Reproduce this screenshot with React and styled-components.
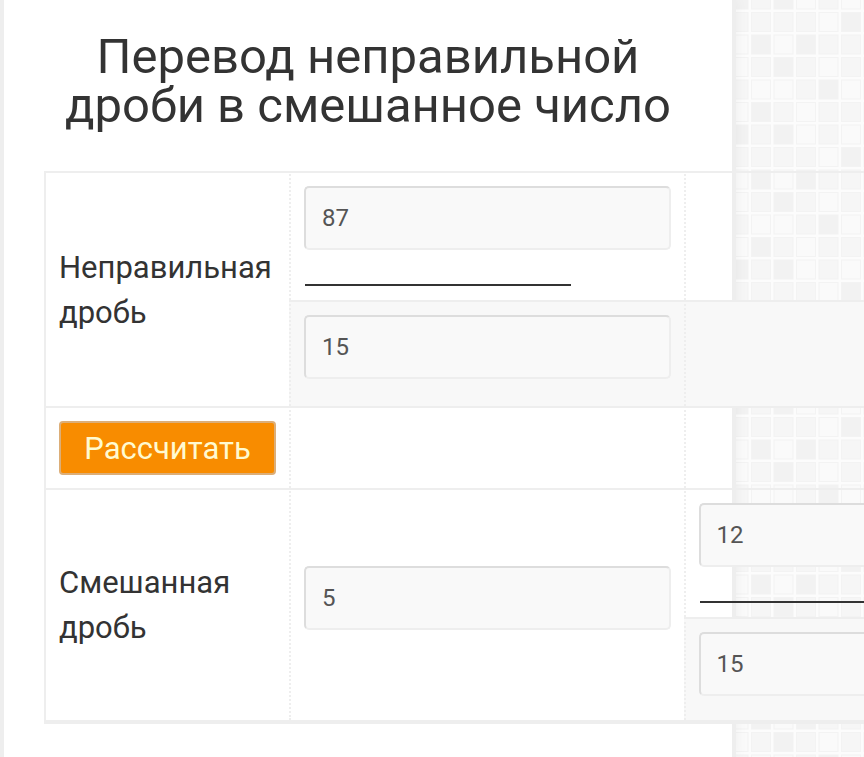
import React, { useState } from 'react';
import styled, { createGlobalStyle } from 'styled-components';

// shade of every tile in one repeat of the page background
const shades = ['#fafafa', '#f6f6f6', '#f2f2f2'];
const mosaic = [
  [2, 1, 2, 0, 1, 0],
  [1, 1, 1, 1, 0, 2],
  [0, 2, 0, 2, 1, 1],
  [0, 1, 2, 1, 0, 1],
  [1, 0, 0, 1, 2, 0],
  [0, 2, 1, 0, 1, 1],
];

const tiles = mosaic
  .map((row, y) =>
    row
      .map(
        (shade, x) =>
          `<rect x="${x * 45 + 4}" y="${y * 45 + 4}" width="38" height="38" fill="${shades[shade]}" stroke="#f3f3f3" stroke-width="2"/>`
      )
      .join('')
  )
  .join('');

const pattern = encodeURIComponent(
  `<svg xmlns="http://www.w3.org/2000/svg" width="135" height="135" viewBox="0 0 270 270"><rect width="270" height="270" fill="#fcfcfc"/>${tiles}</svg>`
);

const GlobalStyle = createGlobalStyle`
  * {
    box-sizing: border-box;
  }

  body {
    margin: 0;
    font-family: Roboto, 'Liberation Sans', sans-serif;
    color: #333;
  }
`;

const Page = styled.div`
  min-height: 100vh;
  padding-right: 128px;
  overflow: hidden;
  background: url("data:image/svg+xml,${pattern}") 727px -12px;
`;

const Panel = styled.main`
  min-height: 100vh;
  padding: 32px 40px;
  background-color: #fff;
  border: solid #eee;
  border-width: 0 4px;
  box-shadow: 0 0 12px rgba(0, 0, 0, 0.05);
`;

const Title = styled.h1`
  margin: 0 0 41px;
  font-size: 49px;
  font-weight: 400;
  line-height: 49px;
  text-align: center;
`;

const Table = styled.table`
  width: 1034px;
  table-layout: fixed;
  border-spacing: 0;
  border-left: 2px solid #eee;
  border-bottom: 4px solid #eee;

  tr:last-child td {
    padding-bottom: 10px;
  }
`;

const LabelCol = styled.col`
  width: 243px;
`;

const Cell = styled.td`
  padding: 13px;
  vertical-align: middle;
  border-top: 2px solid #eee;
  border-left: 2px dotted #eee;
  background-color: ${(props) => (props.$shaded ? '#f8f8f8' : 'transparent')};
`;

const LabelCell = styled(Cell)`
  border-left: none;
`;

const Label = styled.label`
  display: block;
  font-size: 31px;
  line-height: 45px;
`;

const Input = styled.input`
  display: block;
  width: 100%;
  height: 64px;
  margin-bottom: ${(props) => (props.$numerator ? '0' : '14px')};
  padding: 0 16px;
  font-family: inherit;
  font-size: 24px;
  color: #555;
  background-color: #f9f9f9;
  border: 2px solid #eee;
  border-top-color: #ddd;
  border-left-color: #ddd;
  border-radius: 5px;
  outline: none;
`;

const FractionBar = styled.hr`
  width: 266px;
  height: 2px;
  margin: 34px 0 1px 1px;
  border: none;
  background-color: #333;
`;

const Button = styled.button`
  display: block;
  width: 100%;
  height: 54px;
  padding: 0;
  font-family: inherit;
  font-size: 31px;
  color: #fffad0;
  background-color: #f88c00;
  border: 2px solid #dcae78;
  border-radius: 4px;
  cursor: pointer;
`;

const App = () => {
  const [numerator, setNumerator] = useState('87');
  const [denominator, setDenominator] = useState('15');
  const [result, setResult] = useState({ whole: 5, rest: 12, base: 15 });

  const calculate = () => {
    const a = parseInt(numerator, 10);
    const b = parseInt(denominator, 10);
    if (!b || Number.isNaN(a)) return;
    setResult({ whole: Math.trunc(a / b), rest: a % b, base: b });
  };

  return (
    <>
      <GlobalStyle />
      <Page>
        <Panel>
          <Title>Перевод неправильной дроби в смешанное число</Title>
          <Table>
            <colgroup>
              <LabelCol />
              <col />
              <col />
            </colgroup>
            <tbody>
              <tr>
                <LabelCell rowSpan={2}>
                  <Label htmlFor="numerator">Неправильная дробь</Label>
                </LabelCell>
                <Cell>
                  <Input
                    $numerator
                    id="numerator"
                    value={numerator}
                    onChange={(e) => setNumerator(e.target.value)}
                  />
                  <FractionBar />
                </Cell>
                <Cell />
              </tr>
              <tr>
                <Cell $shaded>
                  <Input
                    aria-label="Знаменатель"
                    value={denominator}
                    onChange={(e) => setDenominator(e.target.value)}
                  />
                </Cell>
                <Cell $shaded />
              </tr>
              <tr>
                <LabelCell>
                  <Button type="button" onClick={calculate}>
                    Рассчитать
                  </Button>
                </LabelCell>
                <Cell />
                <Cell />
              </tr>
              <tr>
                <LabelCell rowSpan={2}>
                  <Label htmlFor="whole">Смешанная дробь</Label>
                </LabelCell>
                <Cell rowSpan={2}>
                  <Input id="whole" value={result.whole} readOnly />
                </Cell>
                <Cell>
                  <Input
                    $numerator
                    aria-label="Числитель"
                    value={result.rest}
                    readOnly
                  />
                  <FractionBar />
                </Cell>
              </tr>
              <tr>
                <Cell $shaded>
                  <Input
                    aria-label="Знаменатель результата"
                    value={result.base}
                    readOnly
                  />
                </Cell>
              </tr>
            </tbody>
          </Table>
        </Panel>
      </Page>
    </>
  );
};

export default App;
